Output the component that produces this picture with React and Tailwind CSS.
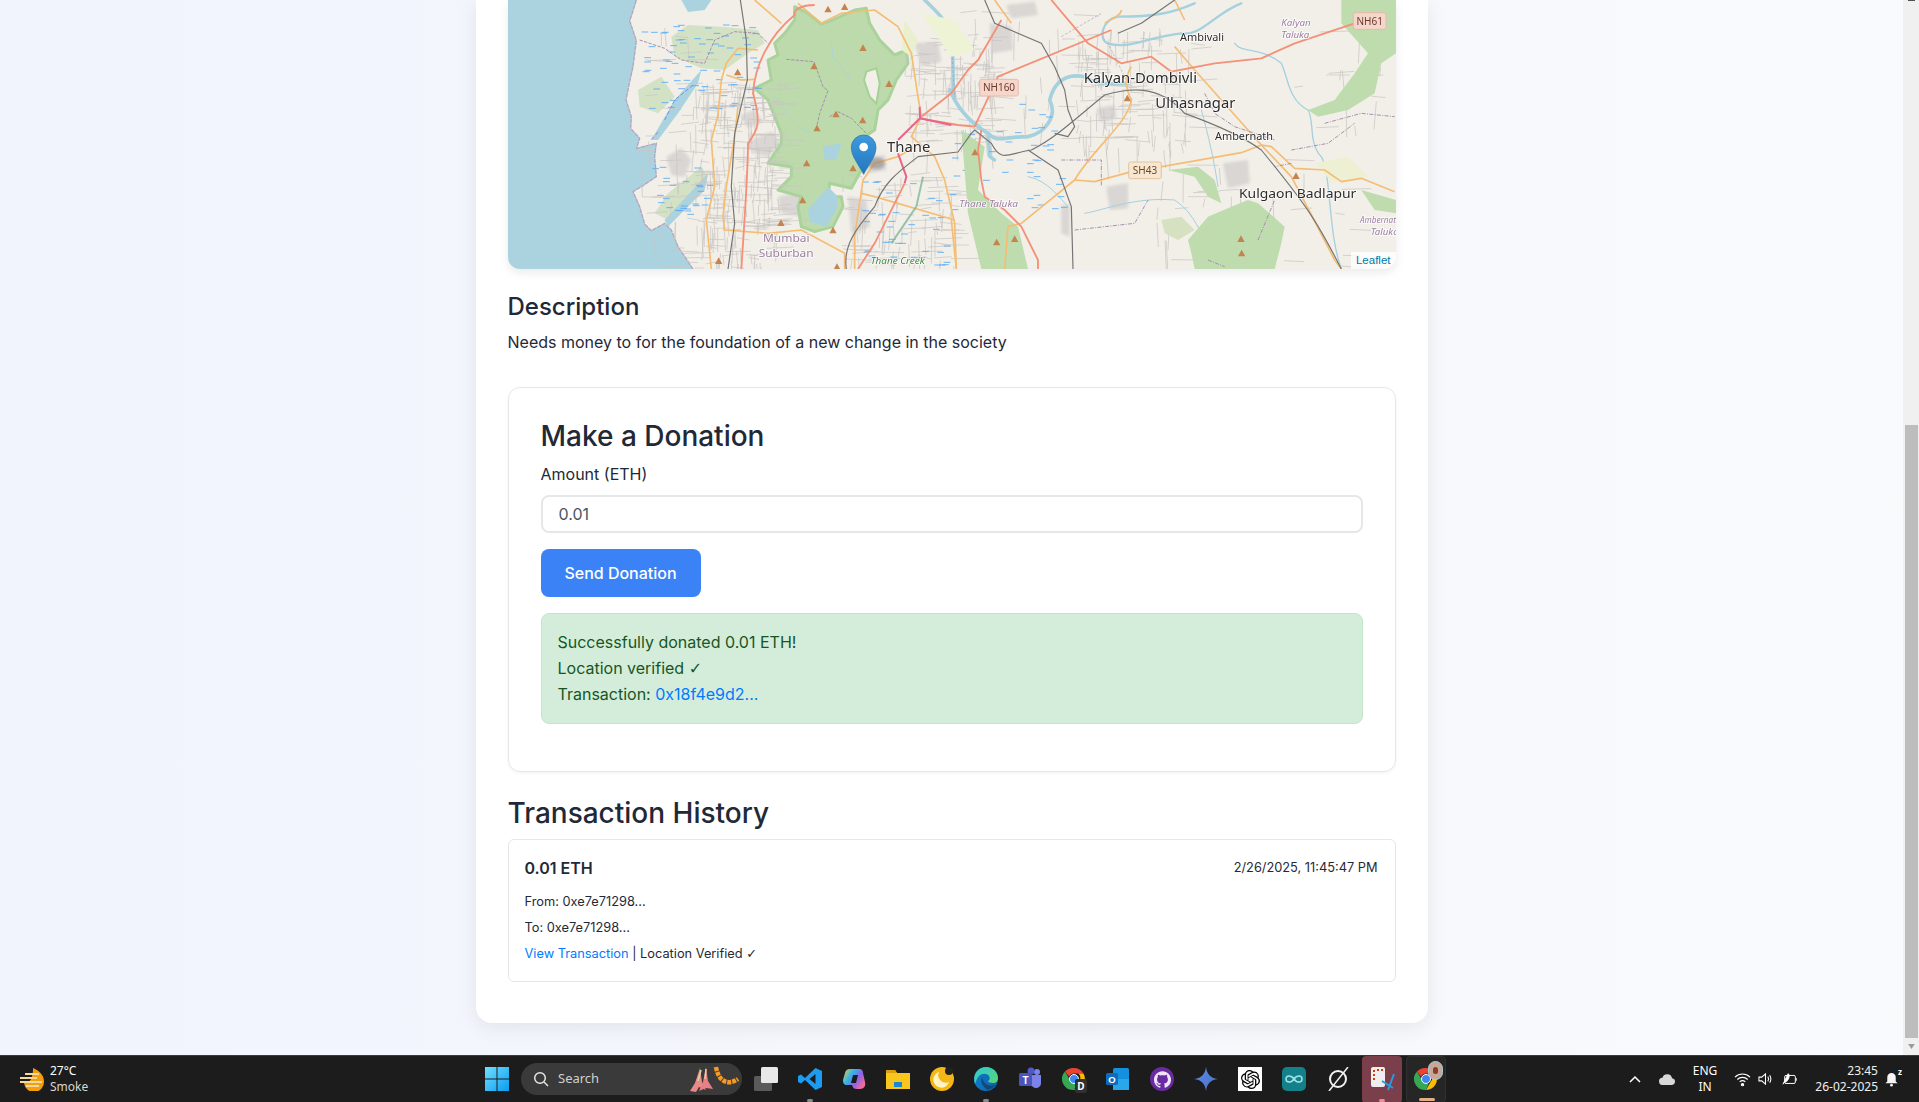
import React from 'react';
import { SiOpenai, SiGithub } from 'react-icons/si';

// small deterministic random so the map looks the same on every render
const makeRand = (seed) => {
  let s = seed;
  return () => {
    s = (s * 9301 + 49297) % 233280;
    return s / 233280;
  };
};

const gridRoads = (x0, y0, x1, y1, n, seed) => {
  const r = makeRand(seed);
  let d = '';
  for (let i = 0; i < n; i++) {
    const x = x0 + r() * (x1 - x0);
    const y = y0 + r() * (y1 - y0);
    const len = 25 + r() * 70;
    if (r() > 0.5) d += `M${x.toFixed(0)} ${y.toFixed(0)}l${len.toFixed(0)} ${(r() * 14 - 7).toFixed(0)}`;
    else d += `M${x.toFixed(0)} ${y.toFixed(0)}l${(r() * 14 - 7).toFixed(0)} ${len.toFixed(0)}`;
  }
  return d;
};

const blueDashes = (x0, y0, x1, y1, n, seed) => {
  const r = makeRand(seed);
  let d = '';
  for (let i = 0; i < n; i++) {
    d += `M${(x0 + r() * (x1 - x0)).toFixed(0)} ${(y0 + r() * (y1 - y0)).toFixed(0)}h20`;
  }
  return d;
};

const Peak = ({ x, y }) => <path d={`M${x} ${y - 10}l11 20h-22z`} fill="#c5834d" />;

const Shield = ({ x, y, w, h, fill, stroke, color, text }) => (
  <g>
    <rect x={x} y={y} width={w} height={h} rx="6" fill={fill} stroke={stroke} strokeWidth="2.5" />
    <text x={x + w / 2} y={y + h / 2 + 11} textAnchor="middle" fontSize="30" fill={color} fontFamily="Noto Sans, sans-serif">{text}</text>
  </g>
);

const Label = ({ x, y, w, size = 42, color = '#2b2b2b', italic, children }) => (
  <text
    x={x}
    y={y}
    textLength={w}
    lengthAdjust="spacingAndGlyphs"
    fontSize={size}
    fill={color}
    fontStyle={italic ? 'italic' : 'normal'}
    fontFamily="Noto Sans, sans-serif"
    stroke="#ffffff"
    strokeOpacity="0.75"
    strokeWidth="5"
    paintOrder="stroke"
  >
    {children}
  </text>
);

const leftPeaks = [[1065, 143], [918, 198], [689, 216], [1143, 251], [960, 27], [1010, 20], [984, 342], [1064, 360], [927, 384], [896, 489], [1035, 504], [884, 600], [819, 668], [975, 690], [632, 782], [987, 800]];
const rightPeaks = [[532, 294], [75, 456], [1038, 527], [873, 716], [875, 759], [140, 726], [194, 716]];

const MapTile = () => (
  <svg viewBox="0 0 2664 807" className="block w-full h-full blur-[0.4px]" preserveAspectRatio="none">
    <defs>
      <filter id="soft" x="-20%" y="-20%" width="140%" height="140%">
        <feGaussianBlur stdDeviation="5" />
      </filter>
      <linearGradient id="pin" x1="0" y1="0" x2="0" y2="1">
        <stop offset="0" stopColor="#3f9ae0" />
        <stop offset="1" stopColor="#2376bd" />
      </linearGradient>
    </defs>
    <rect width="2664" height="807" fill="#f2efe9" />

    {/* sea + coast */}
    <path d="M0 0H385L372 42 365 62 385 122 375 200 366 240 354 300 370 350 368 385 395 415 386 445 445 430 440 470 445 530 400 560 375 575 395 620 410 672 430 692 470 670 490 690 510 740 555 807H0Z" fill="#aad3df" />
    <path d="M385 0 372 42 365 62 385 122 375 200 366 240 354 300 370 350 368 385 395 415 386 445 445 430 440 470 445 530 400 560 375 575 395 620 410 672 430 692 470 670 490 690 510 740 555 807" fill="none" stroke="#b3a5c0" strokeWidth="4" strokeDasharray="14 2" />
    <path d="M520 0H610L590 30 540 36Z" fill="#aad3df" />

    {/* mangrove / wetlands */}
    <g fill="#d3e2c4">
      <path d="M490 110 540 75 640 80 750 90 770 130 720 160 650 210 580 205 500 170Z" />
      <path d="M390 270 460 230 500 290 450 340 395 320Z" />
      <path d="M480 580 580 500 600 530 550 610 480 660 440 640Z" />
    </g>
    <path d="M430 420 500 300 580 210 570 250 510 340 450 420Z" fill="#aad3df" />
    <path d="M470 660 600 520 590 570 520 640 480 680Z" fill="#aad3df" />
    <path d="M430 418 452 395M470 360 500 300 555 255" fill="none" stroke="#6b7df0" strokeWidth="2.5" strokeDasharray="12 6" />

    {/* city grey blocks */}
    <g fill="#d9d6d3" filter="url(#soft)">
      <path d="M475 470 520 445 550 480 530 530 490 525Z" />
      <path d="M695 345 740 330 765 365 720 385Z" />
      <path d="M730 420 790 395 820 430 780 470 735 460Z" />
      <path d="M810 590 880 575 920 610 880 650 820 640Z" />
      <path d="M1020 590 1075 600 1085 680 1030 700Z" />
      <path d="M1070 475 1130 465 1135 510 1080 520Z" />
      <path d="M1220 130 1290 125 1300 185 1240 200Z" />
      <path d="M1445 70 1510 80 1515 150 1450 160Z" />
      <path d="M1495 15 1580 5 1590 45 1510 55Z" />
      <path d="M1765 325 1820 315 1825 355 1775 365Z" />
      <path d="M1795 560 1860 550 1860 625 1805 630Z" />
      <path d="M2145 490 2220 480 2225 550 2160 565Z" />
      <path d="M1660 615 1685 615 1685 710 1660 700Z" />
    </g>

    {/* national park */}
    <path d="M860 20 900 40 940 72 970 62 1040 30 1075 25 1085 70 1115 120 1160 165 1195 150 1200 190 1165 240 1140 300 1110 330 1100 390 1070 410 1040 440 1060 510 1030 565 965 550 960 590 1000 590 1005 620 975 680 920 695 880 680 870 620 880 590 810 570 850 530 850 500 780 490 820 430 820 400 780 300 740 265 790 240 780 180 810 165 800 130 830 100 860 60Z" fill="#bcdaab" stroke="#a9d39a" strokeWidth="9" strokeLinejoin="round" />
    <path d="M1075 215 1105 205 1115 250 1105 310 1085 290 1068 240Z" fill="#f2efe9" stroke="#a6d196" strokeWidth="6" />
    <path d="M945 440 1000 430 985 480 950 480Z" fill="#aad3df" />
    <path d="M900 630 960 560 990 590 985 630 955 680 905 665Z" fill="#aad3df" />
    <path d="M800 290C830 330 860 380 910 400M970 130 975 170 1030 240" fill="none" stroke="#aad3df" strokeWidth="2.5" />
    <path d="M835 178 918 185 945 260 960 272 935 340 925 385M965 350 990 335 1030 355 1075 400" fill="none" stroke="#a88fae" strokeWidth="3" strokeDasharray="10 4" />
    <path d="M395 120 470 145 520 180 590 190 620 120 680 95 750 100 780 130" fill="none" stroke="#a88fae" strokeWidth="3" strokeDasharray="10 4" />

    {/* minor roads */}
    <g fill="none" stroke="#c9c6c3" strokeWidth="2.2">
      <path d={gridRoads(555, 250, 815, 807, 300, 7)} />
      <path d={gridRoads(390, 60, 560, 800, 50, 41)} />
      <path d={gridRoads(1000, 520, 1340, 800, 100, 11)} />
      <path d={gridRoads(1190, 100, 1460, 430, 130, 13)} />
      <path d={gridRoads(1700, 80, 2060, 460, 150, 17)} />
      <path d={gridRoads(1340, 20, 1700, 420, 34, 19)} />
      <path d={gridRoads(1900, 470, 2600, 800, 36, 23)} />
      <path d={gridRoads(2300, 60, 2640, 400, 18, 29)} />
    </g>

    {/* rivers */}
    <g fill="none" stroke="#a5d0de" strokeLinecap="round">
      <path d="M1326 270C1350 330 1390 370 1440 400 1470 430 1480 410 1560 410 1610 400 1650 350 1625 300 1640 240 1680 220 1730 230 1770 260 1830 250 1860 250" strokeWidth="11" />
      <path d="M1250 0C1280 30 1320 60 1330 120 1340 200 1330 250 1340 290" strokeWidth="11" />
      <path d="M1440 410 1445 470 1460 480" strokeWidth="10" />
      <path d="M2060 10C1990 40 1940 50 1830 50 1780 60 1770 120 1800 130 1860 150 1920 110 2020 100 2080 110 2120 40 2200 10" strokeWidth="7" />
      <path d="M2180 130C2200 160 2260 140 2320 190 2340 230 2340 300 2400 330 2420 360 2400 430 2440 470 2470 520 2460 700 2500 807" strokeWidth="4" />
      <path d="M1730 640C1790 630 1880 590 2000 600 2060 640 2080 700 2110 770" strokeWidth="3" />
      <path d="M1560 530C1620 540 1660 600 1680 620" strokeWidth="3" />
      <path d="M2080 330C2100 400 2120 490 2130 560" strokeWidth="3" />
    </g>
    <path d="M1330 120 1340 290M1660 110 1780 40M1860 250 1800 130" fill="none" stroke="#a88fae" strokeWidth="2.5" strokeDasharray="8 5" opacity="0.7" />

    {/* marsh dashes */}
    <g stroke="#52a9f5" strokeWidth="2.5">
      <path d={blueDashes(400, 70, 750, 340, 75, 3)} />
      <path d={blueDashes(430, 480, 600, 650, 26, 5)} />
      <path d={blueDashes(1050, 540, 1340, 800, 42, 31)} />
      <path d={blueDashes(1330, 300, 1660, 640, 40, 37)} />
    </g>

    {/* light green bits on the right */}
    <g fill="#bfdcae">
      <path d="M2040 720 2100 650 2170 620 2220 600 2250 610 2330 680 2320 730 2300 807H2060L2050 760Z" />
      <path d="M2500 0H2664V160L2620 190 2600 280 2520 330 2430 350 2400 330 2480 300 2540 220 2580 160 2500 70Z" />
      <path d="M1980 510 2070 500 2120 540 2140 610 2100 590 2060 530Z" />
      <path d="M1360 390 1430 440 1410 570 1480 640 1530 680 1560 807H1420L1380 640Z" />
      <path d="M2560 570 2664 600V640L2600 630Z" />
    </g>
    <path d="M1960 660 2020 650 2060 690 2010 720 1970 700Z" fill="#d6e1c2" />
    <path d="M2420 490 2520 470 2580 530 2470 545Z" fill="#eef0d4" />
    <path d="M1240 40 1340 60 1400 150 1330 170Z" fill="#eef3d6" />
    <path d="M1190 60 1230 120 1210 170 1180 150Z" fill="#e9f0d0" />

    {/* primary roads */}
    <g fill="none" stroke="#f5bd74" strokeWidth="5" strokeLinejoin="round">
      <path d="M740 0 820 70M870 10 940 70 1000 40 1100 30 1170 80 1210 160 1230 290 1240 350 1210 410 1280 470 1310 540 1340 670 1345 807" />
      <path d="M610 807 595 660 620 560 610 420 630 345 640 240 655 190 690 145 750 150M655 225 700 240 740 238" />
      <path d="M690 320 680 410 655 560 645 650 650 690 780 700 880 690 1010 760 1010 807" />
      <path d="M1040 807 1040 710 1065 540 1100 490 1170 470 1220 440M1060 580 1100 590 1340 660" />
      <path d="M1540 670 1500 680 1490 807M1540 670 1700 540 1760 545 1860 518 2200 458 2260 435 2290 440 2360 505 2450 510 2500 545 2560 535 2660 575" />
      <path d="M1700 540C1760 440 1860 370 1870 300 1850 260 1850 230 1870 200M2000 0 2030 60M1840 30C1840 50 1800 60 1790 70M2000 140 2060 210 2260 435 2350 530 2400 625 2480 780 2500 807" />
      <path d="M1460 0 1510 70M1330 660 1345 807" />
    </g>

    {/* trunk roads */}
    <g fill="none" stroke="#f39077" strokeWidth="5.5" strokeLinejoin="round">
      <path d="M700 807C710 650 720 520 720 430 750 390 760 370 735 280 740 200 780 110 860 45 855 30 880 15 920 15" />
      <path d="M1050 807 1100 730 1190 550M1235 355 1350 375 1400 380 1470 230 1810 90M1240 350 1330 280 1380 210 1410 180 1480 60M1630 0 1740 130 1840 190 1930 170 1990 215 2120 190 2260 175 2360 130 2540 70" />
      <path d="M1420 390 1410 450 1420 540 1430 590 1490 630 1540 680 1590 780 1590 807" />
    </g>
    <path d="M1170 420 1236 355 1235 320M1236 355 1330 375M1170 460 1195 530 1190 550" fill="none" stroke="#e8648a" strokeWidth="6" strokeLinejoin="round" />
    <path d="M1245 530 1225 620 1150 730" fill="none" stroke="#7fb79b" strokeWidth="6" opacity="0.8" />

    {/* rail */}
    <g fill="none" stroke="#747474" strokeWidth="3.5" strokeLinejoin="round">
      <path d="M697 0 715 120 718 240 680 400 670 560 680 670 660 807" />
      <path d="M1015 807C1005 740 1040 690 1100 620 1130 540 1180 510 1230 470L1350 456 1390 400 1400 390 1450 430C1480 490 1500 460 1570 450 1650 410 1720 340 1790 285 1860 265 1950 250 2030 340 2140 380 2220 420 2260 450 2400 620 2430 670 2500 807" />
      <path d="M1430 0 1460 70 1600 130 1640 200 1670 270 1680 330 1700 380 1680 410 1640 400M1560 450 1650 510 1690 620 1695 807M1830 100 1900 70 2000 0" />
    </g>
    <path d="M2090 280 2120 340 2180 380 2300 420M1660 480 1780 480 1780 560M2350 490 2300 500M2250 720 2300 600M2100 780 2150 800M1700 690 1880 670 1920 600M2450 370 2560 340 2660 350M2350 450 2460 430 2540 370" fill="none" stroke="#a88fae" strokeWidth="3" strokeDasharray="12 4 3 4" />

    {leftPeaks.map(([x, y]) => <Peak key={`${x}-${y}`} x={x} y={y} />)}
    {rightPeaks.map(([x, y]) => <Peak key={`${x}-${y}`} x={x + 1326} y={y} />)}

    <Shield x={1415} y={238} w={116} h={50} fill="#f6d6cb" stroke="#e7b3a3" color="#6b3a2c" text="NH160" />
    <Shield x={2536} y={38} w={98} h={50} fill="#f6d6cb" stroke="#e7b3a3" color="#6b3a2c" text="NH61" />
    <Shield x={1862} y={486} w={98} h={50} fill="#f7e6d2" stroke="#e0bd92" color="#6b4a25" text="SH43" />

    <Label x={1137} y={456} w={130} size={42}>Thane</Label>
    <Label x={1727} y={250} w={340} size={42}>Kalyan-Dombivli</Label>
    <Label x={1942} y={323} w={240} size={42}>Ulhasnagar</Label>
    <Label x={2121} y={419} w={174} size={30}>Ambernath</Label>
    <Label x={2016} y={124} w={132} size={30}>Ambivali</Label>
    <Label x={2193} y={593} w={352} size={40}>Kulgaon Badlapur</Label>
    <Label x={765} y={726} w={140} size={32} color="#9b7fa0">Mumbai</Label>
    <Label x={752} y={771} w={165} size={32} color="#9b7fa0">Suburban</Label>
    <Label x={1088} y={791} w={162} size={24} color="#3f8a3f" italic>Thane Creek</Label>
    <Label x={1354} y={622} w={176} size={26} color="#9b7fa0" italic>Thane Taluka</Label>
    <Label x={2320} y={78} w={88} size={26} color="#9b7fa0" italic>Kalyan</Label>
    <Label x={2320} y={114} w={84} size={26} color="#9b7fa0" italic>Taluka</Label>
    <Label x={2556} y={670} w={122} size={26} color="#9b7fa0" italic>Ambernath</Label>
    <Label x={2588} y={704} w={84} size={26} color="#9b7fa0" italic>Taluka</Label>

    {/* marker */}
    <ellipse cx="1105" cy="490" rx="26" ry="18" fill="#555" opacity="0.35" filter="url(#soft)" />
    <path d="M1067 523C1050 490 1030 470 1030 442A37 37 0 0 1 1104 442C1104 470 1084 490 1067 523Z" fill="url(#pin)" stroke="#2a6fa8" strokeWidth="2" />
    <circle cx="1067" cy="441" r="13" fill="#fff" />
  </svg>
);

const Chrome = () => (
  <svg viewBox="0 0 24 24" className="w-[24px] h-[24px]">
    <path d="M12 1a11 11 0 0 1 9.500 5.500H12a5.500 5.500 0 0 0-5 3L3 4.500A11 11 0 0 1 12 1Z" fill="#ea4335" />
    <path d="M21.500 6.500A11 11 0 0 1 12 23l4.700-8.200a5.500 5.500 0 0 0-.4-8.300Z" fill="#fbbc04" />
    <path d="M3 4.500l4.800 8.300a5.500 5.500 0 0 0 6.800 4L12 23A11 11 0 0 1 3 4.500Z" fill="#34a853" />
    <circle cx="12" cy="12" r="4.500" fill="#4285f4" stroke="#fff" strokeWidth="1" />
  </svg>
);

const Tile = ({ active, open, dot, children }) => (
  <div className={`relative flex items-center justify-center w-[40px] h-[47px] rounded-[4px] ${active === 'snip' ? 'bg-[#7a3f4a]' : active ? 'bg-[#262626] border border-[#303030]' : ''}`}>
    {children}
    {open && <span className="absolute bottom-[1px] left-[17px] w-[6px] h-[3px] rounded-full bg-[#8a8a8a]" />}
    {dot && <span className={`absolute bottom-[1px] rounded-full h-[3px] ${dot}`} />}
  </div>
);

const Taskbar = () => (
  <div className="flex items-center h-[47px] bg-[#1c1c1c] border-t border-[#3a3a3a] text-white font-['Noto_Sans',sans-serif] text-[12px]">
    <div className="flex items-center w-[485px] pl-[19px] shrink-0">
      <svg viewBox="0 0 26 24" className="w-[26px] h-[24px]">
        <path d="M14 1c7 3 11 8 11 13a10 10 0 0 1-20 2c4 0 8-3 8-7 1-3 1-5 1-8Z" fill="#f59e0b" />
        <path d="M1 11h17M6 7h14M1 15h22M7 19h13" stroke="#f3d9a0" strokeWidth="2.2" />
      </svg>
      <div className="ml-[5px] leading-[16px] text-[12px]">
        <div>27°C</div>
        <div className="text-[#d6d6d6]">Smoke</div>
      </div>
    </div>

    <svg viewBox="0 0 24 24" className="w-[24px] h-[24px] shrink-0">
      <defs>
        <linearGradient id="win" x1="0" y1="0" x2="1" y2="1">
          <stop offset="0" stopColor="#6fe0ff" />
          <stop offset="1" stopColor="#0a9bf0" />
        </linearGradient>
      </defs>
      <path d="M0 0h11.500v11.500H0zM12.500 0H24v11.500H12.500zM0 12.500h11.500V24H0zM12.500 12.500H24V24H12.500z" fill="url(#win)" />
    </svg>

    <div className="flex items-center ml-[12px] w-[221px] h-[32px] rounded-full bg-[#3a3a3a] pl-[12px] shrink-0">
      <svg viewBox="0 0 16 16" className="w-[16px] h-[16px]" fill="none" stroke="#e6e6e6" strokeWidth="1.5">
        <circle cx="7" cy="7" r="5.300" />
        <path d="M11 11l4 4" />
      </svg>
      <span className="ml-[9px] text-[13px] text-[#d0d0d0]">Search</span>
      <svg viewBox="0 0 52 28" className="ml-auto mr-[2px] w-[52px] h-[28px]">
        <path d="M2 26 7 18 12 3 14 17 18 25 11 22 8 27Z" fill="#e98a8a" />
        <path d="M11 26 15 17 18 2 20 16 25 24 18 23Z" fill="#e77f86" />
        <path d="M10 16 13 5M17 14 18 4" fill="none" stroke="#d8d8a0" strokeWidth="1.500" />
        <path d="M28 2C30 14 38 22 50 14" fill="none" stroke="#f59a23" strokeWidth="4.500" strokeDasharray="4 1" />
      </svg>
    </div>

    <div className="flex items-center gap-[4px] ml-[4px] shrink-0">
      <Tile>
        <svg viewBox="0 0 26 26" className="w-[26px] h-[26px]">
          <rect x="1" y="10" width="18" height="15" rx="1.500" fill="#5a5a5a" />
          <rect x="8" y="1" width="17" height="16" rx="1.500" fill="#e8e8e8" />
        </svg>
      </Tile>
      <Tile open>
        <svg viewBox="0 0 24 24" className="w-[24px] h-[24px]">
          <path d="M17.500 1 24 4v16l-6.500 3L7 13 3 16.500 0 15V9l3-1.500L7 11ZM17.500 7 11.500 12l6 5Z" fill="#1d9bf0" />
        </svg>
      </Tile>
      <Tile>
        <svg viewBox="0 0 24 24" className="w-[24px] h-[24px]">
          <defs>
            <linearGradient id="cop" x1="0" y1="0" x2="1" y2="0.6">
              <stop offset="0" stopColor="#f7c948" />
              <stop offset="0.4" stopColor="#2fb5e8" />
              <stop offset="0.7" stopColor="#8a63e8" />
              <stop offset="1" stopColor="#f06a9b" />
            </linearGradient>
          </defs>
          <path d="M8 2h9c3 0 4 2 4 4l2 9c1 4-1 7-5 7h-3c-3 0-4-1-5-4H5c-3 0-4-2-4-5l2-7c1-3 2-4 5-4Zm3 6-2 8h5l2-8Z" fill="url(#cop)" fillRule="evenodd" />
        </svg>
      </Tile>
      <Tile>
        <svg viewBox="0 0 24 24" className="w-[24px] h-[24px]">
          <path d="M0 3h9l2 3h13v16H0Z" fill="#f8c61c" />
          <path d="M0 3h9l2 3H0Z" fill="#d8a010" />
          <rect x="8" y="15" width="8" height="5" fill="#1d86d0" />
        </svg>
      </Tile>
      <Tile>
        <svg viewBox="0 0 24 24" className="w-[24px] h-[24px]">
          <circle cx="12" cy="12" r="12" fill="#f5b715" />
          <path d="M9 5a8 8 0 1 0 10 10A7.500 7.500 0 0 1 9 5Z" fill="#fff3c4" />
          <circle cx="19" cy="4" r="4" fill="#222" />
        </svg>
      </Tile>
      <Tile open>
        <svg viewBox="0 0 24 24" className="w-[24px] h-[24px]">
          <defs>
            <linearGradient id="edge" x1="0" y1="0" x2="1" y2="0">
              <stop offset="0" stopColor="#0f7cc9" />
              <stop offset="1" stopColor="#0a5fb0" />
            </linearGradient>
            <linearGradient id="edge2" x1="0" y1="0" x2="1" y2="1">
              <stop offset="0" stopColor="#2fc9d8" />
              <stop offset="1" stopColor="#5bd66e" />
            </linearGradient>
          </defs>
          <circle cx="12" cy="12" r="12" fill="url(#edge)" />
          <path d="M12 0c7 0 12 5 12 11 0 3-2 5-5 5-3 0-5-1-5-2 2-1 2-3 1-5-2-3-7-3-10 0C3 11 2 14 1 17-2 8 4 0 12 0Z" fill="url(#edge2)" />
          <path d="M8 10c-2 4 0 10 6 13a12 12 0 0 0 7-5c-5 2-11 0-13-8Z" fill="#1c1c1c" opacity="0.45" />
        </svg>
      </Tile>
      <Tile>
        <svg viewBox="0 0 24 24" className="w-[24px] h-[24px]">
          <circle cx="19" cy="5" r="3" fill="#7b83eb" />
          <circle cx="13" cy="4" r="3.500" fill="#5059c9" />
          <path d="M10 8h13v8a5 5 0 0 1-9 3h-4Z" fill="#7b83eb" />
          <rect x="1" y="6" width="13" height="13" rx="1.500" fill="#4b53bc" />
          <text x="7.500" y="16.500" textAnchor="middle" fontSize="10" fontWeight="700" fill="#fff" fontFamily="Liberation Sans, sans-serif">T</text>
        </svg>
      </Tile>
      <Tile>
        <div className="relative">
          <Chrome />
          <span className="absolute -right-[1px] -bottom-[2px] w-[12px] h-[14px] bg-[#303030] rounded-[2px] text-[10px] leading-[14px] text-center font-bold">D</span>
        </div>
      </Tile>
      <Tile>
        <svg viewBox="0 0 24 24" className="w-[24px] h-[24px]">
          <rect x="7" y="1" width="16" height="22" rx="1.500" fill="#1490df" />
          <path d="M7 12h16v11H7Z" fill="#28a8ea" />
          <rect x="0" y="6" width="12" height="12" rx="1.500" fill="#0f6cbd" />
          <text x="6" y="15.500" textAnchor="middle" fontSize="9.500" fontWeight="700" fill="#fff" fontFamily="Liberation Sans, sans-serif">O</text>
        </svg>
      </Tile>
      <Tile>
        <div className="flex items-center justify-center w-[24px] h-[24px] rounded-full bg-[#6b2ba0]">
          <SiGithub className="w-[17px] h-[17px] text-[#efe4f7]" />
        </div>
      </Tile>
      <Tile>
        <svg viewBox="0 0 24 24" className="w-[24px] h-[24px]">
          <defs>
            <linearGradient id="gem" x1="0" y1="0" x2="1" y2="1">
              <stop offset="0" stopColor="#5b8def" />
              <stop offset="1" stopColor="#4a6fc0" />
            </linearGradient>
          </defs>
          <path d="M12 0c1 7 4 11 12 12-8 1-11 5-12 12-1-7-4-11-12-12 8-1 11-5 12-12Z" fill="url(#gem)" />
        </svg>
      </Tile>
      <Tile>
        <div className="flex items-center justify-center w-[24px] h-[24px] bg-white">
          <SiOpenai className="w-[19px] h-[19px] text-black" />
        </div>
      </Tile>
      <Tile>
        <svg viewBox="0 0 24 24" className="w-[24px] h-[24px]">
          <rect width="24" height="24" rx="5" fill="#13808a" />
          <path d="M12 12c-2-3-4-3-5-3a3 3 0 0 0 0 6c1 0 3 0 5-3 2-3 4-3 5-3a3 3 0 0 1 0 6c-1 0-3 0-5-3Z" fill="none" stroke="#9fe3e6" strokeWidth="1.500" />
        </svg>
      </Tile>
      <Tile>
        <svg viewBox="0 0 24 24" className="w-[24px] h-[24px]" fill="none" stroke="#f2f2f2" strokeWidth="2">
          <circle cx="12" cy="12" r="8" />
          <path d="M22 0 3 24" strokeWidth="1.500" />
        </svg>
      </Tile>
      <Tile active="snip" dot="left-[17px] w-[6px] bg-[#f08a9a]">
        <svg viewBox="0 0 26 26" className="w-[26px] h-[26px]">
          <rect x="2" y="1" width="14" height="20" rx="2" fill="#eee" />
          <path d="M4 4h2v2H4zM8 3h2v2H8zM4 8h2v2H4zM4 12h2v2H4zM12 3h2v2h-2z" fill="#d83b01" />
          <path d="M25 8 19 24M13 15l11 7" stroke="#2a9be0" strokeWidth="2" fill="none" />
        </svg>
      </Tile>
      <Tile active="chrome" dot="left-[12px] w-[16px] bg-[#e0b080]">
        <div className="relative">
          <Chrome />
          <span className="absolute -right-[5px] -top-[6px] flex items-center justify-center w-[15px] h-[19px] rounded-full bg-[#c9a795] border border-[#a7cde0]">
            <span className="w-[5px] h-[7px] rounded-full bg-[#8c3a34]" />
          </span>
        </div>
      </Tile>
    </div>

    <div className="flex items-center ml-auto pr-[20px] h-full">
      <svg viewBox="0 0 12 12" className="w-[12px] h-[12px]" fill="none" stroke="#fff" strokeWidth="1.500"><path d="M1 9l5-5 5 5" /></svg>
      <svg viewBox="0 0 18 12" className="w-[17px] h-[11px] ml-[18px]"><path d="M4 12a4 4 0 0 1-.5-8A5.500 5.500 0 0 1 14 4.500a3.800 3.800 0 0 1 0 7.500Z" fill="#d8d8d8" /></svg>
      <div className="ml-[15px] w-[28px] text-center leading-[16px]"><div>ENG</div><div>IN</div></div>
      <svg viewBox="0 0 18 16" className="w-[17px] h-[15px] ml-[15px]" fill="none" stroke="#fff" strokeWidth="1.200"><path d="M1 5.500C5.500 1 12.500 1 17 5.500M3.500 8c3-3 8-3 11 0M6 10.500c1.800-1.500 4.200-1.500 6 0" /><circle cx="9" cy="13.500" r="1.200" fill="#fff" /></svg>
      <svg viewBox="0 0 16 14" className="w-[15px] h-[14px] ml-[7px]" fill="none" stroke="#fff" strokeWidth="1.100"><path d="M1 5h3l4-3.500v11L4 9H1ZM10.500 4.500c1 1.500 1 3.500 0 5M12.500 3c1.500 2.500 1.500 5.500 0 8" /></svg>
      <svg viewBox="0 0 18 14" className="w-[16px] h-[14px] ml-[9px]" fill="none" stroke="#fff" strokeWidth="1.100"><rect x="3" y="3" width="12" height="9" rx="1.500" /><path d="M16 6v3M1 13 7 1c2 2 1 6-2 9" fill="#fff" /></svg>
      <div className="ml-[10px] w-[70px] text-right leading-[16px] text-[#f0f0f0]"><div>23:45</div><div>26-02-2025</div></div>
      <div className="relative ml-[6px] w-[15px] h-[15px]">
        <svg viewBox="0 0 16 16" className="w-[15px] h-[15px]"><path d="M8 1a4.500 4.500 0 0 1 4.500 4.500V10l2 2H1.500l2-2V5.500A4.500 4.500 0 0 1 8 1Z" fill="#f5f5f5" /><circle cx="8" cy="14" r="1.500" fill="#f5f5f5" /></svg>
        <span className="absolute -top-[5px] -right-[3px] text-[8px] leading-[10px] font-bold">z</span>
      </div>
    </div>
  </div>
);

const Scrollbar = () => (
  <div className="flex flex-col w-[16px] shrink-0 bg-[#f0f0f0] pl-[2px] pr-[1px]">
    <div className="mx-auto w-[7px] h-[1px] bg-[#505050]" />
    <div className="h-[424px]" />
    <div className="h-[613px] bg-[#bdbdbd]" />
    <div className="flex items-center justify-center h-[17px] text-[#9a9a9a]">
      <svg viewBox="0 0 8 6" className="w-[7px] h-[5px]"><path d="M0 0h8L4 6Z" fill="currentColor" /></svg>
    </div>
  </div>
);

const Check = () => <span className="inline-block h-[1em] leading-[1em] font-['DejaVu_Sans',sans-serif]">✓</span>;

const App = () => {
  return (
    <div className="flex flex-col h-screen overflow-hidden font-['Inter',sans-serif] text-[#1f2937]">
      <div className="flex flex-1 min-h-0">
        <main className="flex-1 bg-gradient-to-r from-[#f1f4fd] to-[#f9fafc]">
          <div className="w-[952px] mx-auto px-8 pb-[41px] bg-white rounded-b-[16px] shadow-[0_4px_20px_rgba(0,0,0,0.08)]">
            <div className="relative h-[269px] rounded-b-[12px] overflow-hidden bg-[#f2efe9] shadow-[0_4px_10px_rgba(0,0,0,0.08)]">
              <MapTile />
              <div className="absolute right-0 bottom-0 px-[5px] h-[17px] bg-white/80 text-[11.5px] leading-[17px] text-[#0078a8] font-['Liberation_Sans',sans-serif]">
                Leaflet
              </div>
            </div>

            <h2 className="mt-[23px] text-[24px] leading-[29px] font-medium">Description</h2>
            <p className="mt-[9px] text-[16px] leading-[24px]">Needs money to for the foundation of a new change in the society</p>

            <section className="mt-[33px] px-8 pt-[31px] pb-[47px] border border-[#e5e7eb] rounded-[12px] shadow-[0_1px_3px_rgba(0,0,0,0.06)]">
              <h2 className="text-[28px] leading-[34px] font-medium">Make a Donation</h2>
              <label className="block mt-[9px] text-[16px] leading-[24px]">Amount (ETH)</label>
              <input
                type="text"
                readOnly
                value="0.01"
                className="block w-full h-[38px] mt-[9px] px-4 border-2 border-[#e5e7eb] rounded-[8px] text-[16px] text-[#4b5563] outline-none"
              />
              <button type="button" className="block w-[160px] h-[48px] mt-4 rounded-[8px] bg-[#3b82f6] text-white text-[16px] font-medium">
                Send Donation
              </button>
              <div className="mt-4 px-4 pt-[15px] pb-4 border border-[#c3e6cb] rounded-[8px] bg-[#d4edda] text-[16px] leading-[26px] text-[#155724]">
                <div className="h-[26px]">Successfully donated 0.01 ETH!</div>
                <div className="h-[26px]">Location verified <Check /></div>
                <div className="h-[26px]">Transaction: <a href="#tx" className="text-[#007bff]">0x18f4e9d2...</a></div>
              </div>
            </section>

            <h2 className="mt-6 text-[28px] leading-[34px] font-medium">Transaction History</h2>
            <div className="mt-[9px] pl-4 pr-[17px] pt-4 pb-[14px] border border-[#e5e7eb] rounded-[6px]">
              <div className="flex items-center justify-between h-[24px]">
                <span className="text-[16px] font-semibold">0.01 ETH</span>
                <span className="text-[12.8px]">2/26/2025, 11:45:47 PM</span>
              </div>
              <div className="mt-[9px] text-[12.8px] leading-[26px]">
                <div className="h-[26px]">From: 0xe7e71298...</div>
                <div className="h-[26px]">To: 0xe7e71298...</div>
                <div className="h-[26px]"><a href="#tx" className="text-[#007bff]">View Transaction</a> | Location Verified <Check /></div>
              </div>
            </div>
          </div>
        </main>
        <Scrollbar />
      </div>
      <Taskbar />
    </div>
  );
};

export default App;
